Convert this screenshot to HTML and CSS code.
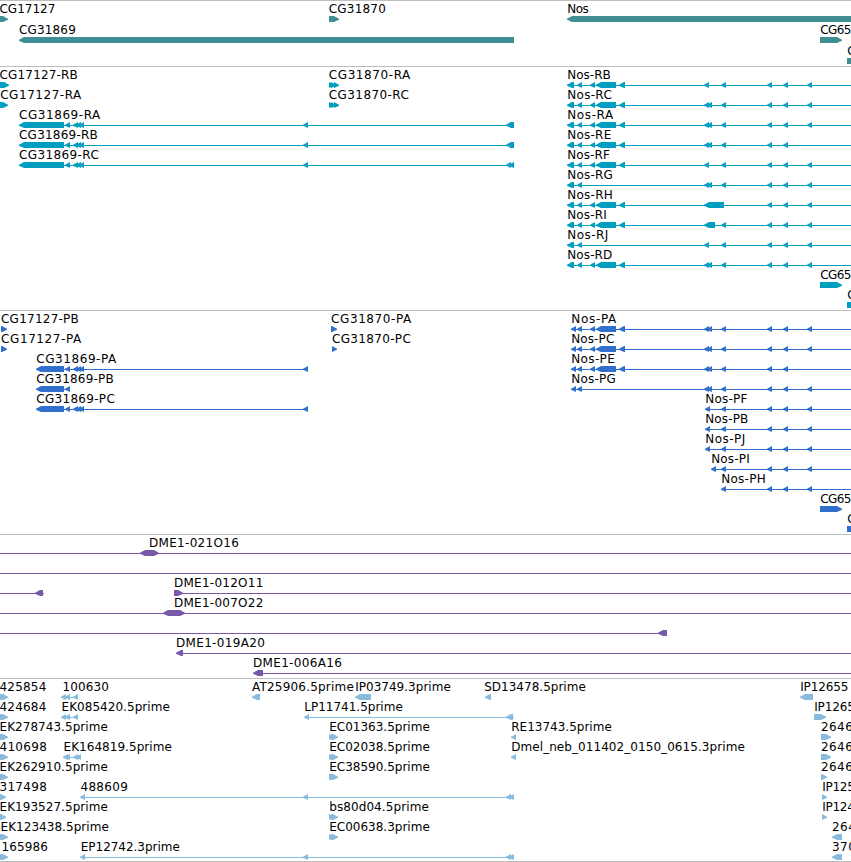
FILE: index.html
```html
<!DOCTYPE html>
<html lang="en">
<head>
    <meta charset="UTF-8">
    <meta name="viewport" content="width=device-width, initial-scale=1.0">
    <title>Genome tracks</title>
    <link rel="stylesheet" href="styles.css">
</head>
<body>
    <main class="browser">
        <svg class="track genes" id="genes"></svg>
        <svg class="track transcripts" id="transcripts"></svg>
        <svg class="track proteins" id="proteins"></svg>
        <svg class="track clones" id="clones"></svg>
        <svg class="track ests" id="ests"></svg>
    </main>
    <script src="tracks.js"></script>
</body>
</html>
```

FILE: styles.css
```css
body {
    margin: 0;
    background-color: #fff;
    overflow: hidden;
}
.browser {
    display: flex;
    flex-direction: column;
    width: 851px;
    height: 861px;
    border-bottom: 1px solid #bebebe;
}
.track {
    display: block;
    box-sizing: border-box;
    width: 100%;
    flex: none;
    border-top: 1px solid #bebebe;
    overflow: hidden;
}
.track text {
    font-family: "DejaVu Sans", sans-serif;
    font-size: 12px;
    fill: #000;
}
.track path {
    fill: currentColor;
}
.track rect {
    fill: currentColor;
    shape-rendering: crispEdges;
}
.genes {
    height: 66px;
    color: #408f94;
}
.transcripts {
    height: 244px;
    color: #009fc0;
}
.proteins {
    height: 224px;
    color: #3070cc;
}
.clones {
    height: 144px;
    color: #7859a8;
}
.ests {
    height: 183px;
    color: #88bbdd;
}
```

FILE: tracks.js
```js
const SVG = "http://www.w3.org/2000/svg";
const END = 860; // past the right edge

// feature: [row, label, label start, label end, direction, blocks, line]
const tail = [[721, 726], [767, 772], [783, 788], [807, 812]];
const utr = [[590, 595], [596, 616], [619, 625]];
const one = [[704, 709]];
const two = [[704, 709], [707, 712]];
const rnaStart = [[567, 574], [577, 582]];
const cdsStart = [[571, 576], [577, 582]];
const mid = [[65, 70], [73, 78], [76, 81], [79, 84]];
const triple = [[329, 334], [331, 336], [334, 339]];
const pair = [[329, 334], [331, 338]];
const right2 = [[506, 511], [509, 514]];

const genes = [
    [0, "CG17127", 0, 55, "r", [[-6, 8]]],
    [0, "CG31870", 329.3, 385.5, "r", [[329, 339]]],
    [0, "Nos", 567.7, 588.5, "l", [[567, END]]],
    [1, "CG31869", 19.5, 75.5, "l", [[19, 514]]],
    [1, "CG65", 820.7, 851, "r", [[820, 842]]],
    [2, "C", 847.7, 855, "n", [[847, END]]]
];

const transcripts = [
    [0, "CG17127-RB", 0, 77.5, "r", [[-6, 9]]],
    [1, "CG17127-RA", 0.7, 81, "r", [[-6, 8]]],
    [0, "CG31870-RA", 329.3, 410, "r", triple],
    [1, "CG31870-RC", 329.3, 408.5, "r", triple],
    [2, "CG31869-RA", 19.5, 100, "l", [[19, 64], ...mid, [303, 308], [506, 514]], [64, 514]],
    [3, "CG31869-RB", 19.5, 97.5, "l", [[19, 64], ...mid, [303, 308], [506, 514]], [64, 514]],
    [4, "CG31869-RC", 19.5, 98.5, "l", [[19, 64], ...mid, [303, 308], ...right2], [64, 514]],
    [0, "Nos-RB", 567.7, 610.5, "l", [...rnaStart, ...utr, ...one, ...tail], [570, END]],
    [1, "Nos-RC", 567.7, 611.5, "l", [...rnaStart, ...utr, ...two, ...tail], [570, END]],
    [2, "Nos-RA", 567.7, 613, "l", [...rnaStart, ...utr, ...two, ...tail], [570, END]],
    [3, "Nos-RE", 567.7, 611, "l", [...rnaStart, ...utr, ...two, ...tail.slice(0, 3)], [570, END]],
    [4, "Nos-RF", 567.7, 609.5, "l", [...rnaStart, ...utr, ...one, ...tail], [570, END]],
    [5, "Nos-RG", 567.7, 612.5, "l", [...rnaStart, ...two, ...tail], [570, END]],
    [6, "Nos-RH", 567.7, 612.5, "l", [...rnaStart, ...utr, [704, 724], ...tail.slice(1)], [570, END]],
    [7, "Nos-RI", 567.7, 606.5, "l", [...rnaStart, ...utr, [704, 715], ...tail], [570, END]],
    [8, "Nos-RJ", 567.7, 608, "l", [...rnaStart, ...one, ...tail], [570, END]],
    [9, "Nos-RD", 567.7, 612, "l", [...rnaStart, ...utr, ...two, ...tail], [570, END]],
    [10, "CG65", 820.7, 851, "r", [[820, 842]]],
    [11, "C", 847.7, 855, "n", [[847, END]]]
];

const proteins = [
    [0, "CG17127-PB", 1.5, 78.5, "r", [[1, 7]]],
    [1, "CG17127-PA", 1.5, 81, "r", [[1, 7]]],
    [0, "CG31870-PA", 331.5, 411, "r", [[331, 337]]],
    [1, "CG31870-PC", 332.5, 410.5, "r", [[332, 337]]],
    [2, "CG31869-PA", 36.7, 116, "l", [[36, 64], ...mid, [303, 308]], [64, 308]],
    [3, "CG31869-PB", 36.7, 113.5, "l", [[36, 64], [65, 70]], [64, 70]],
    [4, "CG31869-PC", 36.7, 114.5, "l", [[36, 64], ...mid, [303, 308]], [64, 308]],
    [0, "Nos-PA", 571.7, 616, "l", [...cdsStart, ...utr, ...two, ...tail], [574, END]],
    [1, "Nos-PC", 571.7, 614, "l", [...cdsStart, ...utr, ...two, ...tail], [574, END]],
    [2, "Nos-PE", 571.7, 614.5, "l", [...cdsStart, ...utr, ...two, ...tail.slice(0, 3)], [574, END]],
    [3, "Nos-PG", 571.7, 615.5, "l", [...cdsStart, ...two, ...tail], [574, END]],
    [4, "Nos-PF", 705.7, 747, "l", [[705, 710], ...tail], [708, END]],
    [5, "Nos-PB", 705.7, 748, "l", [[705, 710], ...tail], [708, END]],
    [6, "Nos-PJ", 705.7, 745, "l", [[705, 710], ...tail], [708, END]],
    [7, "Nos-PI", 711.7, 749.5, "l", [[711, 716], ...tail], [714, END]],
    [8, "Nos-PH", 721.7, 765.5, "l", tail, [724, END]],
    [9, "CG65", 820.7, 851, "r", [[820, 842]]],
    [10, "C", 847.7, 855, "n", [[847, END]]]
];

const clones = [
    [0, "DME1-021O16", 149.5, 238.5, "b", [[140, 159]], [0, END]],
    [1, "", 0, 0, "n", [], [0, END]],
    [2, "", 0, 0, "l", [[35, 43]], [0, 44]],
    [2, "DME1-012O11", 174.5, 263, "r", [[174, 183]], [180, END]],
    [3, "DME1-007O22", 174.5, 263, "b", [[163, 185]], [0, END]],
    [4, "", 0, 0, "l", [[658, 667]], [0, 667]],
    [5, "DME1-019A20", 176.5, 264.5, "l", [[176, 183]], [180, END]],
    [6, "DME1-006A16", 253.5, 341.5, "l", [[253, 263]], [258, END]]
];

const ests = [
    [0, "425854", 0, 46, "r", [[-6, 8]]],
    [0, "100630", 63, 108.5, "l", [[61, 66], [65, 70], [73, 78]], [64, 78]],
    [0, "AT25906.5prime", 252.5, 353.5, "l", [[252, 260]]],
    [0, "IP03749.3prime", 355.7, 450.5, "l", [[355, 371]]],
    [0, "SD13478.5prime", 484.7, 585.5, "l", [[485, 491]]],
    [0, "IP12655", 800.7, 848, "l", [[800, 813]]],
    [1, "424684", 0, 46, "r", [[-6, 8]]],
    [1, "EK085420.5prime", 62, 169.5, "l", [[61, 66], [65, 70], [73, 78]], [64, 78]],
    [1, "LP11741.5prime", 304.7, 402.5, "l", [[304, 309], [506, 513]], [306, 514]],
    [1, "IP1265", 814.7, 854.5, "r", [[814, 826]]],
    [2, "EK278743.5prime", 0, 107.5, "r", [[-6, 8]]],
    [2, "EC01363.5prime", 329.7, 429.5, "r", pair],
    [2, "RE13743.5prime", 511.7, 611.5, "l", [[511, 516]]],
    [2, "2646", 821.5, 852.5, "r", [[821, 831]]],
    [3, "410698", 0, 46.5, "r", [[-6, 8]]],
    [3, "EK164819.5prime", 64, 171.5, "l", [[63, 68], [65, 70], [73, 78], [76, 81]], [66, 81]],
    [3, "EC02038.5prime", 329.7, 429.5, "r", pair],
    [3, "Dmel_neb_011402_0150_0615.3prime", 511.7, 744.5, "l", [[511, 516]]],
    [3, "2646", 821.5, 852.5, "r", [[821, 831]]],
    [4, "EK262910.5prime", 0, 107.5, "r", [[-6, 8]]],
    [4, "EC38590.5prime", 329.7, 429.5, "r", [[329, 338]]],
    [4, "2646", 821.5, 852.5, "r", [[821, 827]]],
    [5, "317498", 0, 46.5, "r", [[-6, 6]]],
    [5, "488609", 81, 127.5, "l", [[80, 85], [303, 308], ...right2], [82, 514]],
    [5, "IP125", 822.7, 854.5, "r", [[822, 827]]],
    [6, "EK193527.5prime", 0, 107.5, "r", [[-6, 6]]],
    [6, "bs80d04.5prime", 329.7, 428.5, "r", pair],
    [6, "IP124", 822.7, 854.5, "r", [[822, 827]]],
    [7, "EK123438.5prime", 1, 108.5, "r", [[-6, 8]]],
    [7, "EC00638.3prime", 329.7, 429.5, "r", pair],
    [7, "264", 832.5, 855.5, "l", [[832, 842]]],
    [8, "165986", 2, 47.5, "r", [[-6, 8]]],
    [8, "EP12742.3prime", 81.3, 179.5, "l", [[80, 85], [303, 308], ...right2], [82, 514]],
    [8, "370", 832.5, 855.5, "l", [[832, 842]]]
];

function add(parent, tag, attrs) {
    const el = document.createElementNS(SVG, tag);
    for (const key in attrs) el.setAttribute(key, attrs[key]);
    parent.appendChild(el);
    return el;
}

// block six pixels high, pointed at the left, the right, both or neither
function blockPath(a, b, y, dir) {
    const points = [];
    if (dir === "l" || dir === "b") {
        points.push([a + 5, y + 6], [a, y + 3.7], [a, y + 2.7], [a + 5, y]);
    } else {
        points.push([a, y + 6], [a, y]);
    }
    if (dir === "r" || dir === "b") {
        points.push([b - 5, y], [b, y + 2.7], [b, y + 3.7], [b - 5, y + 6]);
    } else {
        points.push([b, y], [b, y + 6]);
    }
    return "M" + points.join("L") + "Z";
}

function drawTrack(id, features, pitch) {
    const svg = document.getElementById(id);
    features.forEach(([row, label, x0, x1, dir, blocks, line]) => {
        const y = row * pitch;
        if (line) {
            add(svg, "rect", { x: line[0], y: y + 18, width: line[1] - line[0], height: 1 });
        }
        blocks.forEach(([a, b]) => {
            add(svg, "path", { d: blockPath(a, b, y + 15, dir) });
        });
        if (label) {
            const text = add(svg, "text", { x: x0 - 0.5, y: y + 12 });
            if (label.length > 1) text.setAttribute("textLength", x1 - x0 + 0.8);
            text.textContent = label;
        }
    });
}

drawTrack("genes", genes, 21);
drawTrack("transcripts", transcripts, 20);
drawTrack("proteins", proteins, 20);
drawTrack("clones", clones, 20);
drawTrack("ests", ests, 20);
```
